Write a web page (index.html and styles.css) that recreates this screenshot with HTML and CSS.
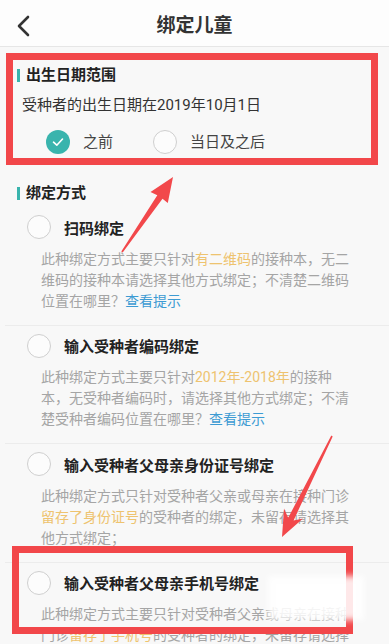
FILE: index.html
```html
<!DOCTYPE html>
<html lang="zh-CN">
<head>
    <meta charset="UTF-8">
    <meta name="viewport" content="width=device-width, initial-scale=1.0">
    <title>绑定儿童</title>
    <link rel="stylesheet" href="styles.css">
</head>
<body>
    <div class="page">
        <header class="topbar">
            <span class="back">
                <svg width="16" height="22" viewBox="0 0 16 22"><path d="M12 2 L3 11 L12 20" fill="none" stroke="#333" stroke-width="2.6" stroke-linecap="round" stroke-linejoin="round"/></svg>
            </span>
            <h1 class="title">绑定儿童</h1>
        </header>

        <section class="range">
            <h2 class="sec-title">出生日期范围</h2>
            <p class="range-text">受种者的出生日期在2019年10月1日</p>
            <div class="choices">
                <label class="choice">
                    <span class="radio on">
                        <svg width="14" height="14" viewBox="0 0 14 14"><path d="M2.5 7.2 L5.8 10.2 L11.5 4" fill="none" stroke="#fff" stroke-width="1.6" stroke-linecap="round" stroke-linejoin="round"/></svg>
                    </span>
                    之前
                </label>
                <label class="choice">
                    <span class="radio"></span>
                    当日及之后
                </label>
            </div>
        </section>

        <section class="modes">
            <h2 class="sec-title">绑定方式</h2>

            <div class="mode">
                <div class="mode-head"><span class="radio"></span><h3>扫码绑定</h3></div>
                <p class="mode-desc">此种绑定方式主要只针对<span class="hl">有二维码</span>的接种本，无二<br>维码的接种本请选择其他方式绑定；不清楚二维码<br>位置在哪里？<a class="tip">查看提示</a></p>
            </div>

            <div class="mode">
                <div class="mode-head"><span class="radio"></span><h3>输入受种者编码绑定</h3></div>
                <p class="mode-desc">此种绑定方式主要只针对<span class="hl">2012年-2018年</span>的接种<br>本，无受种者编码时，请选择其他方式绑定；不清<br>楚受种者编码位置在哪里？<a class="tip">查看提示</a></p>
            </div>

            <div class="mode">
                <div class="mode-head"><span class="radio"></span><h3>输入受种者父母亲身份证号绑定</h3></div>
                <p class="mode-desc">此种绑定方式只针对受种者父亲或母亲在接种门诊<br><span class="hl">留存了身份证号</span>的受种者的绑定，未留存请选择其<br>他方式绑定；</p>
            </div>

            <div class="mode">
                <div class="mode-head"><span class="radio"></span><h3>输入受种者父母亲手机号绑定</h3></div>
                <p class="mode-desc">此种绑定方式主要只针对受种者父亲或母亲在接种<br>门诊<span class="hl">留存了手机号</span>的受种者的绑定，未留存请选择</p>
            </div>
        </section>

        <!-- annotations drawn on top of the screenshot -->
        <div class="mark mark-top"></div>
        <div class="mark mark-bottom"></div>
        <div class="smudge"></div>
        <svg class="arrows" width="389" height="644" viewBox="0 0 389 644">
            <polygon points="173,177 167.8,203 162.5,198.8 122.7,252.4 121.3,251.6 157.3,195.3 150.5,192" fill="#f2484b"/>
            <polygon points="282,537 284,508.5 288.2,517.8 331.3,435.6 332.7,436.4 293.6,520.4 303,518.5" fill="#f2484b"/>
        </svg>
    </div>
</body>
</html>
```

FILE: styles.css
```css
body{
    margin: 0;
    padding: 0;
    background-color: #f8f8f8;
    font-family: Roboto, "Noto Sans CJK SC", sans-serif;
    color: #333;
}
.page{
    position: relative;
    width: 389px;
    height: 644px;
    overflow: hidden;
    background-color: #f8f8f8;
}

.topbar{
    height: 46px;
    display: flex;
    align-items: center;
    justify-content: center;
    position: relative;
    background-color: #fdfdfd;
    border-bottom: 1px solid #e6e6e6;
}
.back{
    position: absolute;
    left: 16px;
    top: 15px;
}
.title{
    margin: 0;
    font-size: 19px;
    font-weight: 600;
    color: #333;
}

.sec-title{
    margin: 0;
    font-size: 15px;
    font-weight: bold;
    line-height: 20px;
    color: #222;
    display: flex;
    align-items: center;
    gap: 6px;
}
.sec-title::before{
    content: "";
    width: 3px;
    height: 13px;
    background-color: #39b4ad;
}

.range{
    padding: 18px 17px 12px 17px;
}
.range-text{
    margin: 10px 0 0 5px;
    font-size: 15px;
    line-height: 20px;
    color: #333;
}
.choices{
    display: flex;
    margin: 15px 0 0 29px;
    gap: 40px;
}
.choice{
    display: flex;
    align-items: center;
    gap: 13px;
    font-size: 15px;
    line-height: 24px;
    color: #444;
}

.radio{
    width: 24px;
    height: 24px;
    box-sizing: border-box;
    border: 1.5px solid #cfcfcf;
    border-radius: 50%;
    background-color: #fcfcfc;
    display: flex;
    align-items: center;
    justify-content: center;
    flex-shrink: 0;
}
.radio.on{
    border: none;
    background-color: #39b4ad;
}

.modes{
    padding-top: 17px;
}
.modes .sec-title{
    margin: 0 0 4px 17px;
}
.mode{
    margin-left: 5px;
    padding: 8px 0 13px 22px;
    border-top: 1px solid #ececec;
}
.mode:first-of-type{
    border-top: none;
}
.mode-head{
    display: flex;
    align-items: center;
    gap: 13px;
    height: 24px;
}
.mode-head h3{
    margin: 0;
    font-size: 15px;
    font-weight: bold;
    color: #222;
}
.mode-desc{
    margin: 9.5px 0 0 14px;
    font-size: 14px;
    line-height: 21px;
    color: #a5a5a5;
}
.hl{
    color: #eec36f;
}
.tip{
    color: #3d9bd3;
}

.mark{
    position: absolute;
    box-sizing: border-box;
    border: 7px solid #f2474a;
}
.mark-top{
    left: 6px;
    top: 53px;
    width: 372px;
    height: 112px;
}
.mark-bottom{
    left: 12px;
    top: 546px;
    width: 341px;
    height: 88px;
}
.smudge{
    position: absolute;
    left: 268px;
    top: 576px;
    width: 96px;
    height: 44px;
    background-color: rgba(255,255,255,0.88);
    filter: blur(3px);
}
.arrows{
    position: absolute;
    left: 0;
    top: 0;
}
```
